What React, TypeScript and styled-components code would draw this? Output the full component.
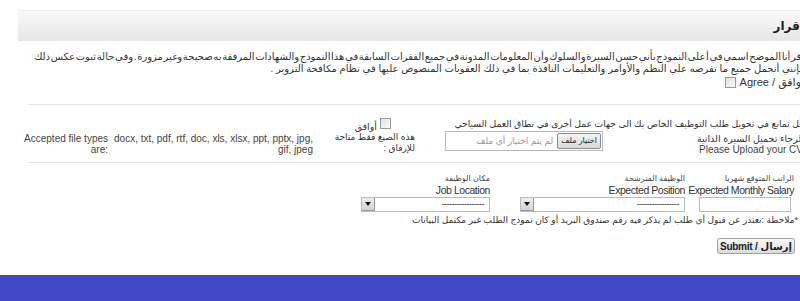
import React from "react";
import styled, { createGlobalStyle } from "styled-components";

const GlobalStyle = createGlobalStyle`
  html, body {
    margin: 0;
    padding: 0;
    background: #fff;
    overflow: hidden;
  }
  body {
    font-family: "Liberation Sans", "DejaVu Sans", sans-serif;
    color: #222;
  }
`;

const Page = styled.div`
  width: 800px;
  height: 301px;
  display: flex;
  flex-direction: column;
  overflow: hidden;
`;

const Sheet = styled.div`
  direction: rtl;
  margin-left: 18px;
  width: 800px;
  padding-top: 10px;
  flex: 1;
`;

const Heading = styled.div`
  border-top: 1px solid #ececec;
  height: 30px;
  background: linear-gradient(#f8f8f8, #e6e6e6);
  padding-right: 14px;
  display: flex;
  align-items: center;
  font: bold 12px "DejaVu Sans", sans-serif;
  color: #1e1e1e;
`;

const Body = styled.div`
  padding: 0 14px 0 10px;
`;

const Pledge = styled.p`
  margin: 10px 0 0;
  font-size: 10px;
  line-height: 12px;
  white-space: nowrap;
  color: #333;
`;

const PledgeLine = styled.span<{ $tight?: boolean }>`
  word-spacing: ${(p) => (p.$tight ? "-2.1px" : "0")};
`;

const CheckLine = styled.label`
  display: flex;
  align-items: center;
  gap: 4px;
  margin-top: 1px;
  font-size: 11px;
  color: #333;
`;

const Box = styled.span`
  display: inline-block;
  width: 9px;
  height: 9px;
  border: 1px solid #9a9a9a;
  background: linear-gradient(135deg, #e2e2e2, #fbfbfb);
  flex: none;
`;

const Divider = styled.div<{ $top: number }>`
  border-top: 1px solid #e3e3e3;
  margin-top: ${(p) => p.$top}px;
`;

const UploadGrid = styled.div`
  display: grid;
  grid-template-columns: 104px 270px 117px 1fr;
  grid-template-rows: 13px 30px;
  padding: 13px 0 0;
  height: 44px;
  font-size: 9.5px;
  line-height: 11px;
  color: #333;
`;

const Question = styled.div`
  grid-column: 1 / span 2;
  grid-row: 1;
  white-space: nowrap;
  font-size: 9.2px;
  line-height: 12px;
`;

const ConsentBox = styled.div`
  grid-column: 3;
  grid-row: 1;
  display: flex;
  align-items: flex-start;
  gap: 3px;
  padding-right: 39px;
  line-height: 14px;
  span:last-child {
    padding-top: 2px;
  }
`;

const CvLabel = styled.div`
  grid-column: 1;
  grid-row: 2;
  padding-top: 2px;
  line-height: 11px;
  white-space: nowrap;
  span {
    display: block;
    font-size: 10px;
    color: #444;
    padding-right: 1px;
  }
`;

const FileField = styled.div`
  grid-column: 2;
  grid-row: 2;
  margin-right: 97px;
  width: 154px;
  height: 18px;
  border: 1px solid #b8b8b8;
  display: flex;
  align-items: center;
  gap: 4px;
  padding: 0 1px;
`;

const FileButton = styled.span`
  font-size: 8px;
  line-height: 12px;
  padding: 1px 3px;
  border: 1px solid #8a8a8a;
  border-radius: 2px;
  background: linear-gradient(#f4f4f4, #d9d9d9);
  color: #222;
  white-space: nowrap;
`;

const FileHint = styled.span`
  font-size: 9px;
  color: #999;
  white-space: nowrap;
`;

const FormatsLabel = styled.div`
  grid-column: 3;
  grid-row: 2;
  padding: 1px 15px 0 0;
  width: 92px;
  font-size: 9px;
`;

const Types = styled.div`
  grid-column: 4;
  grid-row: 2;
  display: flex;
  gap: 2px;
  padding-top: 2px;
  font-size: 10px;
  line-height: 11px;
  color: #444;
`;

const TypeList = styled.div`
  width: 203px;
  text-align: right;
`;

const TypeCaption = styled.div`
  width: 92px;
  direction: ltr;
  text-align: right;
`;

const FieldRow = styled.div`
  display: flex;
  padding: 11px 10px 0 0;
`;

const Field = styled.div<{ $w: number; $gap: number }>`
  width: ${(p) => p.$w}px;
  margin-left: ${(p) => p.$gap}px;
  display: flex;
  flex-direction: column;
  align-items: flex-start;
`;

const ArLabel = styled.div`
  font-size: 8px;
  line-height: 10px;
  color: #444;
  white-space: nowrap;
`;

const EnLabel = styled.div`
  font-size: 10.5px;
  letter-spacing: -0.45px;
  line-height: 12px;
  color: #333;
  white-space: nowrap;
`;

const TextBox = styled.div`
  margin: 1px 3px 0 0;
  width: 90px;
  height: 13px;
  border: 1px solid #b5bcc6;
  background: #fff;
`;

const Select = styled.div<{ $w: number }>`
  margin-top: 1px;
  width: ${(p) => p.$w - 2}px;
  height: 13px;
  border: 1px solid #b5bcc6;
  display: flex;
  align-items: center;
  justify-content: space-between;
  font-size: 9px;
  line-height: 13px;
  color: #333;
  span {
    padding-right: 5px;
    letter-spacing: -0.5px;
  }
`;

const Arrow = styled.div`
  width: 12px;
  height: 12px;
  border: 1px solid #9a9a9a;
  border-left: none;
  border-top: none;
  background: linear-gradient(#eeeeee, #d2d2d2);
  display: flex;
  align-items: center;
  justify-content: center;
`;

const Note = styled.div`
  margin: 2px 6px 0 0;
  font-size: 9px;
  line-height: 12px;
  color: #333;
  white-space: nowrap;
`;

const Submit = styled.button`
  display: block;
  margin: 12px 9px 0 0;
  height: 16px;
  padding: 0 2px;
  border: 1px solid #a0a0a0;
  border-radius: 3px;
  background: linear-gradient(#fafafa, #dcdcdc);
  font: bold 10px "Liberation Sans", "DejaVu Sans", sans-serif;
  letter-spacing: -0.3px;
  color: #222;
  direction: rtl;
`;

const Footer = styled.div`
  height: 26px;
  background: #4149c9;
`;

const DownArrow = () => (
  <svg width="6" height="4" viewBox="0 0 6 4">
    <path d="M0 0h6L3 4z" fill="#111" />
  </svg>
);

const fields = [
  { ar: "الراتب المتوقع شهريا", en: "Expected Monthly Salary", w: 99, gap: 10, select: 0 },
  { ar: "الوظيفة المترشحة", en: "Expected Position", w: 185, gap: 10, select: 165 },
  { ar: "مكان الوظيفة", en: "Job Location", w: 129, gap: 0, select: 129 },
];

const App: React.FC = () => {
  return (
    <Page>
      <GlobalStyle />
      <Sheet>
        <Heading>اقرار</Heading>
        <Body>
          <Pledge>
            <PledgeLine $tight>
              اقر أنا الموضح اسمي في أ على النموذج بأني حسن السيرة والسلوك وأن المعلومات المدونة في جميع الفقرات السابقة في هذا النموذج والشهادات المرفقة به صحيحة وغير مزورة . وفي حالة ثبوت عكس ذلك
            </PledgeLine>
            <br />
            <PledgeLine>
              فإنني أتحمل جميع ما تفرضه علي النظم والأوامر والتعليمات النافذة بما في ذلك العقوبات المنصوص عليها في نظام مكافحة التزوير .
            </PledgeLine>
          </Pledge>
          <CheckLine>
            <span>اوافق / Agree</span>
            <Box />
          </CheckLine>
          <Divider $top={15} />
          <UploadGrid>
            <Question>هل تمانع في تحويل طلب التوظيف الخاص بك الى جهات عمل أخرى في نطاق العمل السياحي</Question>
            <ConsentBox>
              <Box />
              <span>أوافق</span>
            </ConsentBox>
            <CvLabel>
              الرجاء تحميل السيرة الذاتية
              <span>Please Upload your CV</span>
            </CvLabel>
            <FileField>
              <FileButton>اختيار ملف</FileButton>
              <FileHint>لم يتم اختيار أي ملف</FileHint>
            </FileField>
            <FormatsLabel>هذه الصيغ فقط متاحة للإرفاق :</FormatsLabel>
            <Types>
              <TypeList>docx, txt, pdf, rtf, doc, xls, xlsx, ppt, pptx, jpg, gif, jpeg</TypeList>
              <TypeCaption>Accepted file types are:</TypeCaption>
            </Types>
          </UploadGrid>
          <Divider $top={0} />
          <FieldRow>
            {fields.map((f) => (
              <Field key={f.en} $w={f.w} $gap={f.gap}>
                <ArLabel>{f.ar}</ArLabel>
                <EnLabel>{f.en}</EnLabel>
                {f.select === 0 ? (
                  <TextBox />
                ) : (
                  <Select $w={f.select}>
                    <span>-----------------</span>
                    <Arrow>
                      <DownArrow />
                    </Arrow>
                  </Select>
                )}
              </Field>
            ))}
          </FieldRow>
          <Note>*ملاحظة :نعتذر عن قبول أي طلب لم يذكر فيه رقم صندوق البريد أو كان نموذج الطلب غير مكتمل البيانات</Note>
          <Submit type="button">إرسال / Submit</Submit>
        </Body>
      </Sheet>
      <Footer />
    </Page>
  );
};

export default App;
